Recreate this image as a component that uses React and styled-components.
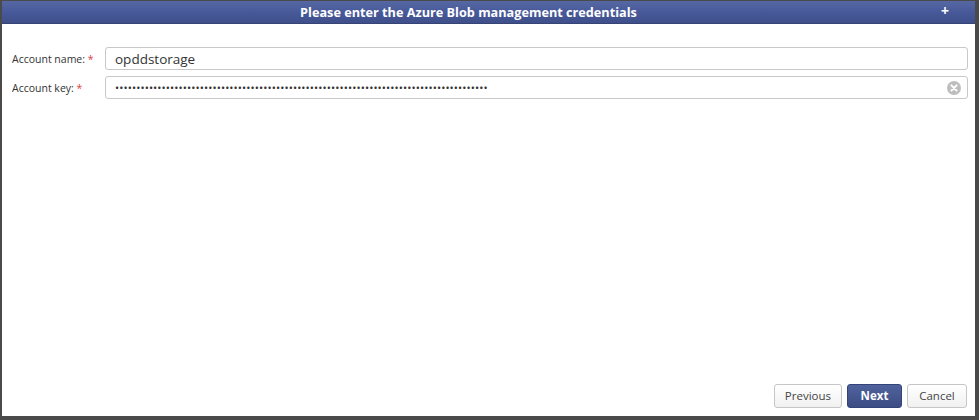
import React from 'react';
import styled, { createGlobalStyle } from 'styled-components';

const GlobalStyle = createGlobalStyle`
  html, body {
    margin: 0;
    padding: 0;
    background: #ffffff;
  }
  body {
    font-family: "Open Sans", "Liberation Sans", sans-serif;
  }
`;

const Dialog = ({ title, children, footer }) => (
  <Window>
    <TitleBar>
      <TitleText>{title}</TitleText>
      <PlusButton>+</PlusButton>
    </TitleBar>
    <Body>{children}</Body>
    <Footer>{footer}</Footer>
  </Window>
);

const FieldRow = ({ label, children }) => (
  <Row>
    <Label>
      {label}: <Required>*</Required>
    </Label>
    <InputBox>{children}</InputBox>
  </Row>
);

const ClearIcon = () => (
  <ClearWrapper>
    <svg width="14" height="14" viewBox="0 0 14 14">
      <circle cx="7" cy="7" r="7" fill="#bdbdbd" />
      <path d="M4.4 4.4 L9.6 9.6 M9.6 4.4 L4.4 9.6" stroke="#ffffff" strokeWidth="2" strokeLinecap="round" />
    </svg>
  </ClearWrapper>
);

const App = () => {
  const dots = '•'.repeat(88);

  return (
    <>
      <GlobalStyle />
      <Dialog
        title="Please enter the Azure Blob management credentials"
        footer={
          <>
            <Button>Previous</Button>
            <Button primary>Next</Button>
            <Button>Cancel</Button>
          </>
        }
      >
        <FieldRow label="Account name">
          <InputText>opddstorage</InputText>
        </FieldRow>
        <FieldRow label="Account key">
          <Dots>{dots}</Dots>
          <ClearIcon />
        </FieldRow>
      </Dialog>
    </>
  );
};

const Window = styled.div`
  display: flex;
  flex-direction: column;
  width: 979px;
  height: 420px;
  box-sizing: border-box;
  border-style: solid;
  border-color: #4a4a4a;
  border-width: 1px 4px 4px 2px;
  background: #ffffff;
  overflow: hidden;
`;

const TitleBar = styled.div`
  position: relative;
  height: 22px;
  flex-shrink: 0;
  display: flex;
  align-items: center;
  justify-content: center;
  padding-right: 40px;
  background: linear-gradient(to bottom, #5668a2 0%, #48599a 50%, #3e4f8a 100%);
  border-bottom: 1px solid #364475;
`;

const TitleText = styled.span`
  color: #ffffff;
  font-weight: 700;
  font-size: 12.7px;
`;

const PlusButton = styled.span`
  position: absolute;
  right: 26px;
  top: 1px;
  color: #ffffff;
  font-weight: 700;
  font-size: 14px;
  line-height: 18px;
`;

const Body = styled.div`
  flex: 1;
  display: flex;
  flex-direction: column;
  gap: 6px;
  padding: 23px 7px 0 10px;
`;

const Row = styled.div`
  display: flex;
  align-items: center;
`;

const Label = styled.label`
  width: 93px;
  flex-shrink: 0;
  font-size: 10.5px;
  color: #333333;
`;

const Required = styled.span`
  color: #e03c3c;
`;

const InputBox = styled.div`
  flex: 1;
  height: 23px;
  box-sizing: border-box;
  display: flex;
  align-items: center;
  border: 1px solid #c8c8c8;
  border-radius: 3px;
  padding: 0 6px 0 9px;
  background: #ffffff;
`;

const InputText = styled.span`
  font-size: 13.5px;
  color: #333333;
`;

const Dots = styled.span`
  flex: 1;
  font-size: 11px;
  letter-spacing: 0.1px;
  color: #333333;
  white-space: nowrap;
  overflow: hidden;
`;

const ClearWrapper = styled.span`
  display: flex;
  align-items: center;
`;

const Footer = styled.div`
  display: flex;
  justify-content: flex-end;
  gap: 5px;
  padding: 0 8px 8px 0;
`;

const Button = styled.button`
  height: 24px;
  box-sizing: border-box;
  padding: 0 10px 1px;
  font-family: "Open Sans", "Liberation Sans", sans-serif;
  font-size: 11.5px;
  font-weight: ${(p) => (p.primary ? 700 : 400)};
  color: ${(p) => (p.primary ? '#ffffff' : '#444444')};
  border-radius: 3px;
  border: 1px solid ${(p) => (p.primary ? '#34447a' : '#c6c6c6')};
  background: ${(p) =>
    p.primary
      ? 'linear-gradient(to bottom, #50629c, #3c4d85)'
      : 'linear-gradient(to bottom, #ffffff, #f1f1f1)'};
  cursor: pointer;
  min-width: ${(p) => (p.primary ? '55px' : '60px')};
`;

export default App;
